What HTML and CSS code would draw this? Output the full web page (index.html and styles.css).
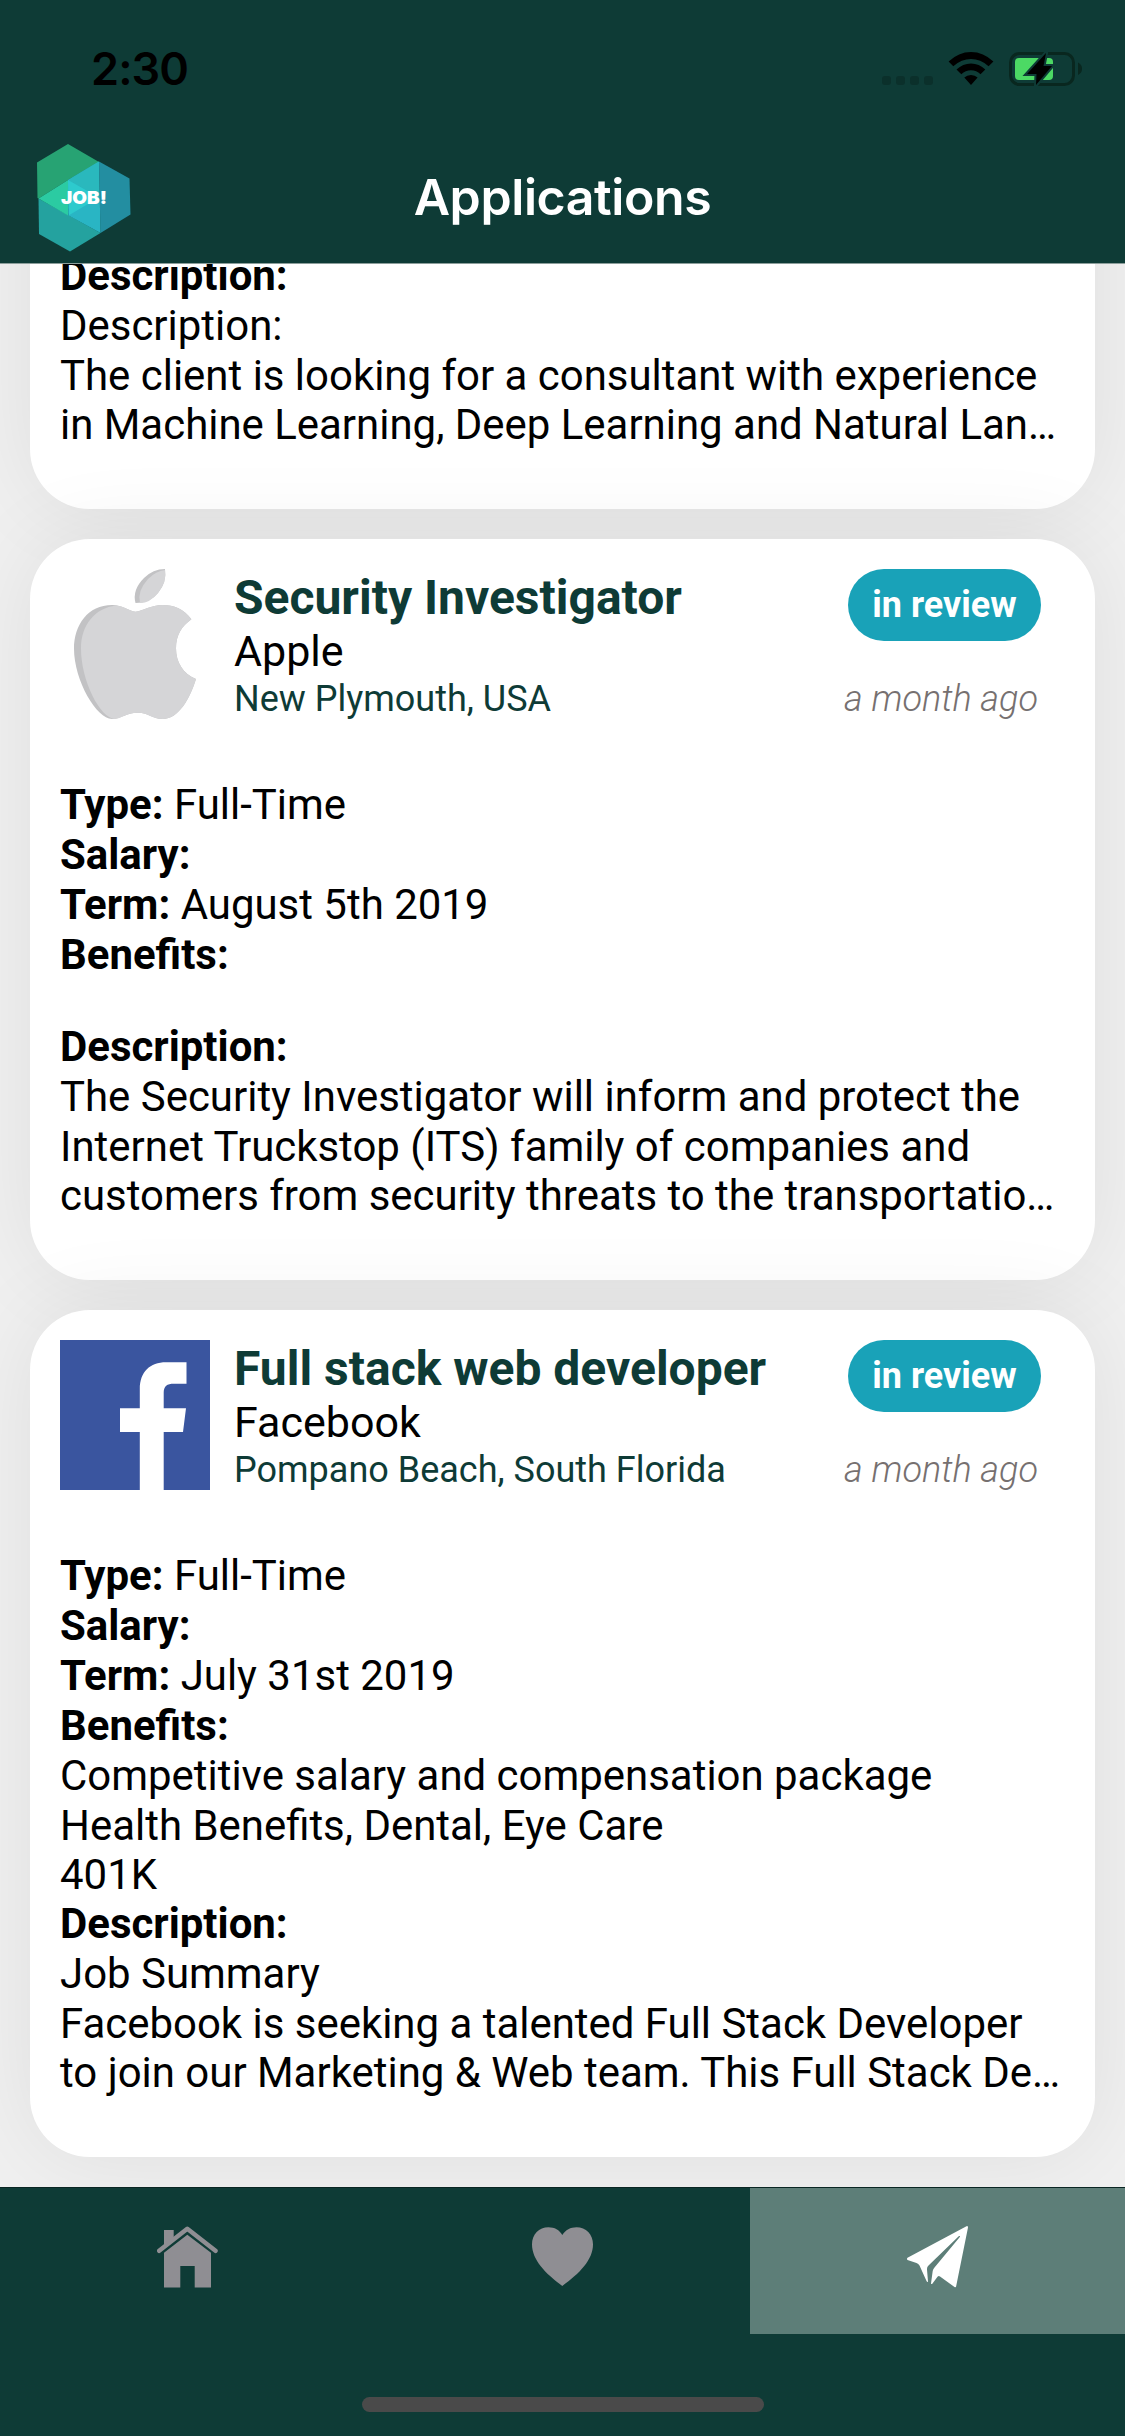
FILE: index.html
```html
<!DOCTYPE html>
<html lang="en">
<head>
<meta charset="utf-8">
<title>Applications</title>
<link rel="stylesheet" href="styles.css">
</head>
<body>
<div class="screen">
  <header class="header">
    <div class="status">
      <span class="time">2:30</span>
      <div class="status-icons">
        <svg width="51" height="34" viewBox="0 0 51 34" fill="#0b302b"><rect y="24" width="9" height="9" rx="3"/><rect x="14" y="24" width="9" height="9" rx="3"/><rect x="28" y="24" width="9" height="9" rx="3"/><rect x="42" y="24" width="9" height="9" rx="3"/></svg>
        <svg width="46" height="34" viewBox="0 0 46 34"><path d="M.6 9.6Q10.500 0 23 0T45.400 9.600L40.600 14.200Q32.500 7 23 7T5.300 14.200ZM8.500 17.600Q14.800 11.400 23 11.400T37.300 17.600L32.500 22.200Q28.500 18.300 23 18.300T13.300 22.200ZM16.300 25.500Q19 23 23 23T29.600 25.500L23 33Z"/></svg>
        <svg width="73" height="34" viewBox="0 0 73 34">
          <rect x="1.500" y="1.500" width="63" height="31" rx="9" fill="none" stroke="#09271f" stroke-width="3"/>
          <path d="M69 10.500Q73 12.500 73 16.800T69 23Z" fill="#09271f"/>
          <rect x="6" y="6" width="38" height="22" rx="4" fill="#4cd964"/>
          <path d="M37 1L18 22H27.500L27 33L43 14H34.500Z" fill="#000" stroke="#0e3b36" stroke-width="4" stroke-linejoin="miter" paint-order="stroke"/>
        </svg>
      </div>
    </div>
    <div class="navbar">
      <svg class="brand" width="94" height="108" viewBox="0 0 94 108">
        <path d="M0 18.500L31 0L62 18L31 36L1.500 54.500L.5 54Z" fill="#27a373"/>
        <path d="M1.500 54.500L63.500 89L33 107.500L2 90Z" fill="#24a29f"/>
        <path d="M62 17.500L92.500 34.500L93.500 70.500L63.500 89Z" fill="#238ea1"/>
        <path d="M31 36L62 17.500L63.500 89L31.500 71.500Z" fill="#29b5c4"/>
        <path d="M31 36L62 17.500V53.500Z" fill="#2ab8bd"/>
        <path d="M31 36V71.500L1.500 54.500Z" fill="#2bcba2"/>
        <path d="M31 36L62 53.500L31.500 71.500Z" fill="#2dcacd"/>
        <text class="brand-text" x="24" y="59.500" textLength="46" lengthAdjust="spacingAndGlyphs">JOB!</text>
      </svg>
      <h1 class="title">Applications</h1>
    </div>
  </header>

  <main class="list">
    <article class="card card-partial">
      <p class="line"><b>Description:</b></p>
      <p class="line">Description:</p>
      <p class="line">The client is looking for a consultant with experience</p>
      <p class="line tight">in Machine Learning, Deep Learning and Natural Lan…</p>
    </article>

    <article class="card">
      <div class="card-head">
        <svg class="logo" width="150" height="150" viewBox="0 0 150 150">
          <path d="M75.500 34Q72 21 84 9Q93 0 105 0Q107 13 98 24Q90 34 75.500 34Z" fill="#c2c2c4"/>
          <path d="M80 34Q77 22 88 10Q96 2 105 1Q107 13 98 24Q90 34 80 34Z" fill="#d5d5d7"/>
          <path d="M75.500 42.700C68 42 63 36 52 36C28 36 14 56 14 79.500C14 112 37 150 52 150C61 150 66 143.700 77.800 143.700C89 143.700 92 150 102.600 150C119 150 130 129 136 110C123 105 116 93 116 79.300C116 66 122 57 131.400 50.300C124 40 114 36 102.600 36C91 36 83 42 75.500 42.700Z" fill="#c2c2c4"/>
          <path d="M75.500 42.700C69 42 64 37 56 36.500C35 39 21 56 21 79.500C21 112 40 149 55 150C62 149 67 143.700 77.800 143.700C89 143.700 92 150 102.600 150C119 150 130 129 136 110C123 105 116 93 116 79.300C116 66 122 57 131.400 50.300C124 40 114 36 102.600 36C91 36 83 42 75.500 42.700Z" fill="#d5d5d7"/>
        </svg>
        <div class="info">
          <h2 class="job">Security Investigator</h2>
          <p class="company">Apple</p>
          <p class="place">New Plymouth, USA</p>
        </div>
        <div class="state">
          <span class="badge">in review</span>
          <span class="date">a month ago</span>
        </div>
      </div>
      <p class="line"><b>Type:</b> Full-Time</p>
      <p class="line"><b>Salary:</b></p>
      <p class="line"><b>Term:</b> August 5th 2019</p>
      <p class="line"><b>Benefits:</b></p>
      <p class="line spaced"><b>Description:</b></p>
      <p class="line">The Security Investigator will inform and protect the</p>
      <p class="line">Internet Truckstop (ITS) family of companies and</p>
      <p class="line tight">customers from security threats to the transportatio…</p>
    </article>

    <article class="card">
      <div class="card-head">
        <svg class="logo" width="150" height="150" viewBox="0 0 150 150">
          <path d="M0 0H150V150H0Z" fill="#3a559f"/>
          <path d="M79.800 150V92H60V68.300H79.800V49C79.800 32 90 22.300 106 22.300H126.500V43.700H114C107 43.700 103.700 46 103.700 53V68.300H126L123 92H103.700V150Z" fill="#fff"/>
        </svg>
        <div class="info">
          <h2 class="job">Full stack web developer</h2>
          <p class="company">Facebook</p>
          <p class="place">Pompano Beach, South Florida</p>
        </div>
        <div class="state">
          <span class="badge">in review</span>
          <span class="date">a month ago</span>
        </div>
      </div>
      <p class="line"><b>Type:</b> Full-Time</p>
      <p class="line"><b>Salary:</b></p>
      <p class="line"><b>Term:</b> July 31st 2019</p>
      <p class="line"><b>Benefits:</b></p>
      <p class="line">Competitive salary and compensation package</p>
      <p class="line">Health Benefits, Dental, Eye Care</p>
      <p class="line tight">401K</p>
      <p class="line tight"><b>Description:</b></p>
      <p class="line">Job Summary</p>
      <p class="line">Facebook is seeking a talented Full Stack Developer</p>
      <p class="line tight">to join our Marketing &amp; Web team. This Full Stack De…</p>
    </article>
  </main>

  <footer class="footer">
    <nav class="tabs">
      <a class="tab"><svg width="62" height="62" viewBox="0.5 0 62 62" fill="#8f8e93"><path d="M30.800 8.700L54.500 26.700V61.500H38.200V40H23.800V61.500H7.500V26.700ZM7.500 4H17.200V12L7.500 20Z"/><path d="M2.700 24.800L30.800 2.800L59 24.800" fill="none" stroke="#8f8e93" stroke-width="4.500" stroke-linecap="round" stroke-linejoin="round"/></svg></a>
      <a class="tab"><svg width="62" height="62" viewBox="0.5 0 62 62" fill="#8f8e93"><path d="M30.800 9C28 4 23 1.300 17 1.300C7.500 1.300 .5 8.500 .5 18.300C.5 34 14 47.500 30.800 60C48 47.500 61.500 34 61.500 18.300C61.500 8.500 54.500 1.300 45 1.300C39 1.300 34 4 30.800 9Z"/></svg></a>
      <a class="tab active"><svg width="62" height="62" viewBox="0.5 0 62 62" fill="#fff"><path d="M61.200 .3Q60.500 -.2 59.500 .5L1 31.800Q0 33 1 34L10 37Q12 37.500 13 39.500L20 55Q21 56.800 21.500 55.500L20.500 43.500Q20.300 41 22 39.500L52.500 10Q54 9.500 53.300 11L28 41.500Q26.500 43 26.200 45L24.500 57.500Q25 58.500 26 57.500L31 50.800Q32.200 49.500 33.500 50.500L48 61Q49.300 61.800 49.600 60.500L61.500 1.500Z"/></svg></a>
    </nav>
    <div class="home-indicator"></div>
  </footer>
</div>
</body>
</html>
```

FILE: styles.css
```css
* { box-sizing: border-box; }
body, h1, h2, p { margin: 0; }

body {
  width: 1125px;
  font-family: Roboto, "Liberation Sans", sans-serif;
  color: #000;
}

.screen {
  display: flex;
  flex-direction: column;
  height: 2436px;
  overflow: hidden;
  background: #f0f0f0;
}

.header {
  flex: none;
  height: 264px;
  background: #0e3b36;
  border-bottom: 1px solid #8c9e9b;
  font-family: Inter, "Liberation Sans", sans-serif;
}

.status {
  display: flex;
  justify-content: space-between;
  height: 132px;
  padding: 52px 43px 0 91px;
}

.time {
  font-size: 45px;
  font-weight: 600;
  line-height: 34px;
  letter-spacing: -0.9px;
}

.status-icons { display: flex; gap: 15px; }

.navbar {
  display: grid;
  grid-template-columns: 1fr auto 1fr;
  padding: 12px 37px 0;
}

.title {
  grid-column: 2;
  font-size: 50px;
  font-weight: 600;
  line-height: 60px;
  padding-top: 23px;
  color: #fff;
  letter-spacing: -0.4px;
}

.brand-text {
  font-size: 18px;
  font-weight: 900;
  fill: #fff;
}

.list {
  flex: 1;
  min-height: 0;
  display: flex;
  flex-direction: column;
  justify-content: flex-end;
  gap: 30px;
  padding: 0 30px 30px;
  overflow: hidden;
}

.card {
  flex: none;
  padding: 30px 30px 59px;
  border-radius: 60px;
  background: #fff;
  box-shadow: 0 0 90px rgba(0, 0, 0, 0.075);
}

.card-partial {
  display: flex;
  flex-direction: column;
  justify-content: flex-end;
  height: 600px;
}

.card-head {
  display: flex;
  height: 150px;
  margin-bottom: 61px;
}

.logo { flex: none; }
.info { flex: 1; padding-left: 24px; }

.job {
  font-size: 48px;
  font-weight: 700;
  line-height: 57px;
  color: #0e3b36;
}

.company {
  height: 52px;
  font-size: 43px;
  line-height: 50px;
}

.place { font-size: 36px; line-height: 43px; color: #0e3b36; }

.state {
  display: flex;
  flex-direction: column;
  align-items: flex-end;
  margin-right: 24px;
}

.badge {
  width: 193px;
  height: 72px;
  border-radius: 36px;
  background: #19a2b8;
  color: #fff;
  font-size: 36px;
  font-weight: 700;
  line-height: 73px;
  text-align: center;
}

.date {
  margin: 37px 3px 0 0;
  font-size: 36px;
  font-style: italic;
  font-weight: 300;
  line-height: 43px;
  color: #767070;
}

.line {
  height: 50px;
  font-size: 41.95px;
  line-height: 50px;
  white-space: nowrap;
}

.tight { height: 49px; line-height: 48px; }
.spaced { margin-top: 42px; }

.footer {
  flex: none;
  height: 249px;
  border-top: 1px solid #0a2623;
  background: #0e3b36;
}

.tabs { display: flex; height: 146px; }
.tab { flex: 1; padding-top: 38px; text-align: center; }
.active { background: #5d7e78; }

.home-indicator {
  width: 402px;
  height: 15px;
  margin: 63px auto 0;
  border-radius: 8px;
  background: #4a4a4a;
}
```
